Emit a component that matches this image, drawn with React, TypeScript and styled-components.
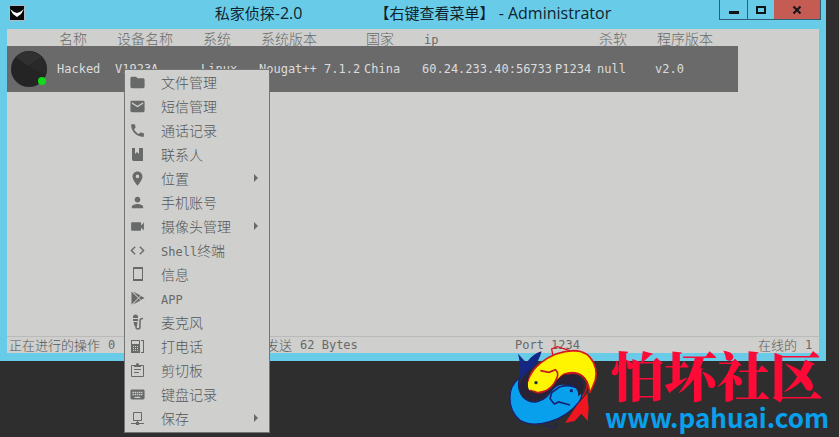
import React from "react";
import styled, { createGlobalStyle } from "styled-components";
import { MdCall, MdCode, MdEmail, MdFolder, MdKeyboard, MdPerson, MdPlace, MdVideocam } from "react-icons/md";

const mono = '"DejaVu Sans Mono", "Noto Sans CJK SC", monospace';
const cjk = '"Noto Sans CJK SC", sans-serif';

const GlobalStyle = createGlobalStyle`
  * { box-sizing: border-box; }
  body { margin: 0; background: #2e2e2e; }
  button { font: inherit; color: inherit; cursor: pointer; }
`;

const Desktop = styled.main`
  position: relative;
  display: flex;
  min-height: 100vh;
  padding: 0 13px 76px 0;
  overflow: hidden;
  color: #686a69;
  font: 12px/16px ${mono};
`;

const Window = styled.section`
  display: flex;
  flex: 1;
  flex-direction: column;
  padding: 0 7px 8px;
  background: #68cce9;
`;

const TitleBar = styled.header`
  display: grid;
  grid-template-columns: 1fr auto 1fr;
  height: 29px;
`;

const AppIcon = styled.svg`
  width: 16px;
  height: 16px;
  margin: 5px 0 0 2px;
`;

const Title = styled.h1`
  display: flex;
  gap: 72px;
  margin: 0;
  color: #10232c;
  font: 400 15px/27px "Open Sans", ${cjk};
  white-space: pre;
`;

const TitleLatin = styled.span`
  font-size: 16px;
`;

const Controls = styled.div`
  display: flex;
  justify-self: end;
  height: 20px;
  margin-right: -2px;
  border: 1px solid #2d6076;
  border-top: 0;
`;

const Control = styled.button<{ $danger?: boolean }>`
  display: grid;
  place-items: center;
  width: ${(p) => (p.$danger ? 46 : 27)}px;
  padding: 0;
  border: 0;
  border-left: ${(p) => (p.$danger ? 0 : 1)}px solid #2d6076;
  background: ${(p) => (p.$danger ? "#c45c54" : "transparent")};
  color: #101416;

  &:first-child { border-left: 0; }
`;

const ControlGlyph = styled.svg`
  width: 12px;
  height: 12px;
  fill: none;
  stroke: currentColor;
`;

const Content = styled.div`
  display: flex;
  flex: 1;
  flex-direction: column;
  background: #cfcfce;
`;

const ClientTable = styled.table`
  width: 90%;
  border-collapse: collapse;
  table-layout: fixed;
  text-align: left;
  white-space: nowrap;
`;

const Column = styled.col<{ $width?: number }>`
  width: ${(p) => (p.$width ? `${p.$width}px` : "auto")};
`;

const HeadCell = styled.th`
  height: 17px;
  padding: 0 0 0 2px;
  color: #686a69;
  font: 300 14px/16px ${cjk};
`;

const LatinHead = styled.span`
  font: 400 12px/12px ${mono};
`;

const ClientRow = styled.tr`
  height: 46px;
  background: #6a6a6a;
  color: #dcdcdc;
`;

const Cell = styled.td`
  padding: 0;
`;

const Avatar = styled.svg`
  display: block;
  width: 38px;
  height: 38px;
  margin-left: 4px;
`;

const StatusBar = styled.footer`
  display: grid;
  grid-template-columns: 257fr 249fr 243fr 57fr;
  height: 17px;
  margin-top: auto;
  padding: 0 4px 0 2px;
  border-top: 1px solid #bababa;
`;

const StatusItem = styled.span`
  display: flex;
  gap: 8px;
  align-items: center;
  white-space: nowrap;
`;

const StatusLabel = styled.span`
  color: #555756;
  font: 300 13px/16px ${cjk};
`;

const Menu = styled.nav`
  position: absolute;
  top: 69px;
  left: 124px;
  width: 146px;
  padding: 0 0 2px;
  border: 1px solid #747675;
  background: #cfcfce;
`;

const MenuItem = styled.button`
  display: grid;
  grid-template-columns: 17px 1fr 6px;
  column-gap: 15px;
  align-items: center;
  width: 100%;
  height: 24px;
  padding: 0 10px 0 4px;
  border: 0;
  background: transparent;
  text-align: left;

  &:hover { background: #bdbfbe; }
`;

const MenuText = styled.span`
  color: #555756;
  font: 300 14px/20px ${cjk};
  white-space: nowrap;
`;

const Latin = styled.span`
  color: #686a69;
  font: 400 12px/16px ${mono};
`;

const Glyph = styled.svg`
  justify-self: end;
  width: 16px;
  height: 16px;
  fill: currentColor;
`;

const Arrow = styled.svg`
  width: 6px;
  height: 8px;
  fill: currentColor;
`;

const Brand = styled.aside`
  position: absolute;
  right: 12px;
  bottom: 0;
  display: flex;
  align-items: flex-end;
`;

const Fish = styled.svg`
  width: 100px;
  height: 97px;
`;

const BrandText = styled.div`
  display: flex;
  flex-direction: column;
  align-items: center;
  width: 220px;
  margin-left: 2px;
  padding-bottom: 4px;
`;

const BrandName = styled.strong`
  color: #ff0936;
  font: 900 53px/54px "Noto Serif CJK SC", ${cjk};
`;

const BrandLink = styled.a`
  color: #08a0ed;
  font: 700 26px/32px ${cjk};
  text-decoration: none;
`;

const BookIcon = () => (
  <Glyph viewBox="0 0 16 16"><path d="M2 2h3v6l2-2 2 2V2h4v13H3.500Q2 15 2 13z" /></Glyph>
);
const DeviceIcon = () => (
  <Glyph viewBox="0 0 16 16">
    <path d="M3.500 1.500h9v13h-9z" fill="none" stroke="currentColor" />
    <path d="M3 1h10v2H3zM3 13h10v2H3z" />
  </Glyph>
);
const PlayIcon = () => (
  <Glyph viewBox="0 0 16 16">
    <path d="M1.500 1.500 8 8l-6.500 6.500zM3 1.500l7.500 4L8.500 7.500zM3 14.500l7.500-4L8.500 8.500zM11 6l3.500 2-3.500 2-2-2z" />
  </Glyph>
);
const MicIcon = () => (
  <Glyph viewBox="0 0 16 16">
    <path d="M3 3q0-2.500 2.500-2.500T8 3v1H3zM3 5h5v2H3zM3.500 8h4L7 12H4.500z" />
    <path d="M6 11v2q0 2 2 2t2-2V6.500q0-2 3-2" fill="none" stroke="currentColor" strokeWidth="1.500" />
  </Glyph>
);
const DeskPhoneIcon = () => (
  <Glyph viewBox="0 0 16 16">
    <path fillRule="evenodd" d="M1 2h9v13H1zM2 3v3h7V3zM3 8v1h1V8zm2 0v1h1V8zm2 0v1h1V8zM3 10v1h1v-1zm2 0v1h1v-1zm2 0v1h1v-1zM3 12v1h1v-1zm2 0v1h1v-1zm2 0v1h1v-1zM11 2h3v13h-3zM11 3v11h2V3z" />
  </Glyph>
);
const ClipboardIcon = () => (
  <Glyph viewBox="0 0 16 16">
    <path d="M1.500 3.500h12v11h-12zM4 7.500h7M4 10.500h5" fill="none" stroke="currentColor" />
    <path d="M4 3h2q0-2 1.500-2T9 3h2v2H4z" />
  </Glyph>
);
const ComputerIcon = () => (
  <Glyph viewBox="0 0 16 16">
    <path d="M3.500 2.500h8v8h-8zM7.500 11v3M1 13.500h13" fill="none" stroke="currentColor" />
    <path d="M6 12h3v3H6z" />
  </Glyph>
);

type Entry = { icon: React.ReactNode; label: string; latin?: string; nested?: boolean };

const entries: Entry[] = [
  { icon: <MdFolder size={17} />, label: "文件管理" },
  { icon: <MdEmail size={17} />, label: "短信管理" },
  { icon: <MdCall size={17} />, label: "通话记录" },
  { icon: <BookIcon />, label: "联系人" },
  { icon: <MdPlace size={17} />, label: "位置", nested: true },
  { icon: <MdPerson size={17} />, label: "手机账号" },
  { icon: <MdVideocam size={17} />, label: "摄像头管理", nested: true },
  { icon: <MdCode size={17} />, label: "终端", latin: "Shell" },
  { icon: <DeviceIcon />, label: "信息" },
  { icon: <PlayIcon />, label: "", latin: "APP" },
  { icon: <MicIcon />, label: "麦克风" },
  { icon: <DeskPhoneIcon />, label: "打电话" },
  { icon: <ClipboardIcon />, label: "剪切板" },
  { icon: <MdKeyboard size={17} />, label: "键盘记录" },
  { icon: <ComputerIcon />, label: "保存", nested: true },
];

const widths = [50, 58, 86, 58, 105, 58, 133, 42, 58, undefined];
const heads = ["", "名称", "设备名称", "系统", "系统版本", "国家", "ip", "", "杀软", "程序版本"];
const client = ["Hacked", "V1923A", "Linux", "Nougat++ 7.1.2", "China", "60.24.233.40:56733", "P1234", "null", "v2.0"];

function FishLogo() {
  return (
    <Fish viewBox="0 0 300 291" aria-hidden="true">
      <path d="M45 116Q48 75 39 41L64 68Q84 41 110 34Q101 67 82 85L54 111Z" fill="#142785" />
      <path d="M144 49 140 27 157 20 195 32" fill="none" stroke="#db1720" strokeWidth="4" />
      <path d="M44 114C6 140 4 205 44 240C94 270 181 239 221 187C250 145 199 120 165 132C132 145 141 172 98 185C60 194 31 154 44 114Z" fill="#08a0ed" stroke="#182173" strokeWidth="4" />
      <path d="M66 156C60 87 135 34 207 32C265 33 287 94 264 138L254 159C252 112 219 86 176 103C154 117 142 156 99 160L82 149Z" fill="#fff500" stroke="#d71920" strokeWidth="5" />
      <path d="M44 138C50 110 69 91 79 86C59 137 70 154 87 159C139 165 147 112 183 103C220 97 245 122 233 154C216 182 210 164 211 149C189 125 149 132 133 155C108 186 77 190 55 174C46 167 42 152 44 138Z" fill="#282237" />
      <path d="M69 139C68 115 84 99 107 92L132 96 151 89Q164 99 155 116C146 141 124 156 99 158Q74 151 69 139Z" fill="#fff500" />
      <path d="M106 92 132 97 151 89Q163 99 155 115C144 143 125 156 98 158L85 153" fill="none" stroke="#c41b20" strokeWidth="5" />
      <path d="M133 172C139 145 164 136 193 137C215 139 222 154 219 171L198 193 169 189 150 195Z" fill="#08a0ed" />
      <path d="M211 142Q191 132 163 141L140 158 135 176 148 192 161 186 195 195" fill="none" stroke="#182173" strokeWidth="5" />
      <path d="M180 249Q202 216 217 194L248 158Q247 180 251 203L248 243 229 221 209 243Z" fill="#ef1621" />
      <path d="M185 103Q229 91 246 126Q249 150 231 171" fill="none" stroke="#bc1822" strokeWidth="4" />
      <path d="M115 255 149 264 155 247" fill="none" stroke="#182173" strokeWidth="3" />
      <circle cx="93" cy="128" r="5" fill="#173337" />
      <circle cx="199" cy="152" r="5" fill="#182173" />
    </Fish>
  );
}

export default function App() {
  return (
    <Desktop>
      <GlobalStyle />
      <Window>
        <TitleBar>
          <AppIcon viewBox="0 0 16 16"><path fill="#080808" stroke="#a9bdc4" d="M.5.5h15v15H.5z" /><path fill="#fff" d="m1 4 4 3 3 1 3-1 4-3-3 5-4 3-4-3z" /></AppIcon>
          <Title>
            <span>私家侦探<TitleLatin>-2.0</TitleLatin></span>
            <span>【右键查看菜单】<TitleLatin> - Administrator</TitleLatin></span>
          </Title>
          <Controls>
            <Control aria-label="Minimize"><ControlGlyph viewBox="0 0 12 12"><path d="M1 8.500h10" strokeWidth="3" /></ControlGlyph></Control>
            <Control aria-label="Maximize"><ControlGlyph viewBox="0 0 12 12"><path d="M2 3h8v6H2z" strokeWidth="2" /></ControlGlyph></Control>
            <Control $danger aria-label="Close"><ControlGlyph viewBox="0 0 12 12"><path d="m2.500 2.500 7 7m0-7-7 7" strokeWidth="2" /></ControlGlyph></Control>
          </Controls>
        </TitleBar>
        <Content>
          <ClientTable>
            <colgroup>{widths.map((w, i) => <Column key={i} $width={w} />)}</colgroup>
            <thead><tr>{heads.map((h, i) => <HeadCell key={i}>{h === "ip" ? <LatinHead>{h}</LatinHead> : h}</HeadCell>)}</tr></thead>
            <tbody>
              <ClientRow>
                <Cell>
                  <Avatar viewBox="0 0 38 38">
                    <circle cx="18" cy="19" r="18" fill="#242424" />
                    <path d="M5 7Q17-4 31 7L17 16Z" fill="#303030" />
                    <path d="M17 16 31 7q8 10 3 19Z" fill="#292929" />
                    <circle cx="31" cy="31" r="4" fill="#10dc1a" />
                  </Avatar>
                </Cell>
                {client.map((value) => <Cell key={value}>{value}</Cell>)}
              </ClientRow>
            </tbody>
          </ClientTable>
          <StatusBar>
            <StatusItem><StatusLabel>正在进行的操作</StatusLabel><span>0</span></StatusItem>
            <StatusItem><StatusLabel>发送</StatusLabel><span>62 Bytes</span></StatusItem>
            <StatusItem>Port 1234</StatusItem>
            <StatusItem><StatusLabel>在线的</StatusLabel><span>1</span></StatusItem>
          </StatusBar>
        </Content>
      </Window>
      <Menu>
        {entries.map((entry) => (
          <MenuItem key={entry.latin ?? entry.label}>
            {entry.icon}
            <MenuText>{entry.latin && <Latin>{entry.latin}</Latin>}{entry.label}</MenuText>
            {entry.nested && <Arrow viewBox="0 0 6 8"><path d="m1 0 4 4-4 4z" /></Arrow>}
          </MenuItem>
        ))}
      </Menu>
      <Brand>
        <FishLogo />
        <BrandText><BrandName>怕坏社区</BrandName><BrandLink href="#home">www.pahuai.com</BrandLink></BrandText>
      </Brand>
    </Desktop>
  );
}
